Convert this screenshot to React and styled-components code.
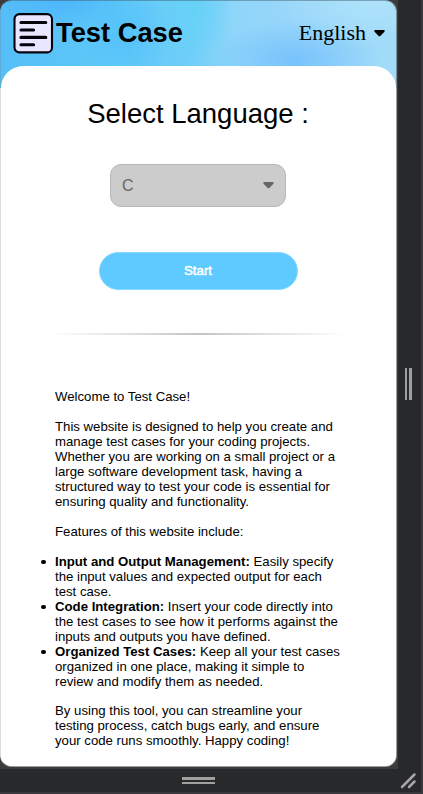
import React from 'react';
import styled, { createGlobalStyle } from 'styled-components';

const GlobalStyle = createGlobalStyle`
  *, *::before, *::after { box-sizing: border-box; }
  body { margin: 0; background: #28292b; overflow: hidden; }
`;

const Workspace = styled.div`
  display: grid;
  grid-template-columns: 398px 25px;
  grid-template-rows: 769px 25px;
  width: 423px;
  height: 794px;
  background: #28292b;
  font-family: "Liberation Sans", Arial, sans-serif;
  color: #000;
`;

const Bezel = styled.div`
  background: #3c3c3d;
  padding: 0 1px 2px 0;
`;

const Device = styled.div`
  width: 397px;
  height: 767px;
  border: 1px solid;
  border-color: rgba(60, 90, 105, 0.45) rgba(90, 90, 90, 0.6) rgba(90, 90, 90, 0.6) rgba(120, 120, 120, 0.25);
  border-radius: 12px;
  overflow: hidden;
  background-origin: border-box;
  background-image:
    linear-gradient(transparent 88px, #fff 88px),
    radial-gradient(ellipse 85px 40px at 295px 60px, rgba(112, 190, 252, 0.8), transparent),
    radial-gradient(ellipse 100px 45px at 370px 0, rgba(178, 228, 250, 0.8), transparent),
    radial-gradient(ellipse 40px 50px at 192px 12px, rgba(100, 210, 247, 0.9), transparent),
    radial-gradient(ellipse 45px 45px at 125px 35px, rgba(78, 188, 252, 0.6), transparent),
    radial-gradient(ellipse 70px 30px at 62px 0, rgba(74, 181, 252, 0.9), transparent),
    linear-gradient(90deg, #55bef8 0, #5fc9f7 120px, #70cef9 190px, #90d6fa 235px, #98d6fa 300px, #a2dcf9 397px);
`;

const Header = styled.header`
  display: flex;
  align-items: center;
  justify-content: space-between;
  height: 65px;
  padding: 0 11px 0 12px;
`;

const Brand = styled.div`
  display: flex;
  align-items: center;
  gap: 2px;
`;

const BrandName = styled.h1`
  margin: 0 0 2px;
  font-size: 27.3px;
  line-height: 32px;
  font-weight: 700;
  white-space: nowrap;
`;

const LocalePicker = styled.div`
  display: flex;
  align-items: center;
  gap: 8px;
  padding-bottom: 1px;
  font: 22px/26px "Liberation Serif", "Times New Roman", serif;
`;

const Sheet = styled.main`
  display: flex;
  flex-direction: column;
  align-items: center;
  height: 700px;
  padding: 32px 1px 0 0;
  border-radius: 22px 22px 0 0;
  background: #fff;
`;

const Title = styled.h2`
  margin: 0;
  font-size: 27.5px;
  line-height: 32px;
  font-weight: 400;
  white-space: nowrap;
`;

const LanguageSelect = styled.div`
  display: flex;
  align-items: center;
  justify-content: space-between;
  width: 176px;
  height: 43px;
  margin-top: 34px;
  padding: 0 11px;
  border: 1px solid #b8b8b8;
  border-radius: 11px;
  background: #ccc;
  color: #666;
  font-size: 16px;
`;

const StartButton = styled.button`
  width: 199px;
  height: 38px;
  margin-top: 45px;
  padding: 0 0 2px;
  border: 1px solid #86daff;
  border-radius: 19px;
  background: #5fcaff;
  color: #fff;
  font: 400 13.33px/15px "Liberation Sans", Arial, sans-serif;
  -webkit-text-stroke: 0.5px #fff;
`;

const Divider = styled.div`
  width: 296px;
  height: 2px;
  margin: 43px 0 0 2px;
  background: linear-gradient(90deg, transparent, #c4c4c4, transparent);
`;

const Article = styled.article`
  width: 286px;
  margin-top: 54px;
  font-size: 13.2px;
  line-height: 15px;
`;

const Paragraph = styled.p`
  margin: 0 0 15px;
`;

const Features = styled.ul`
  margin: 0 0 14px;
  padding: 0;
  list-style: none;
`;

const Feature = styled.li`
  &::before {
    content: "";
    display: inline-block;
    width: 4.5px;
    height: 4.5px;
    margin: 0 9.5px 2px -14px;
    border-radius: 50%;
    background: #000;
  }
`;

const Handle = styled.div`
  display: flex;
  align-items: center;
  justify-content: center;
  border: 0 solid #39393b;
  border-width: ${({ $vertical }) => ($vertical ? '0 2px 0 0' : '0 0 2px')};
  padding: ${({ $vertical }) => ($vertical ? '0 2px 1px 0' : '0 2px 0 0')};
`;

const Grip = styled.span`
  width: ${({ $vertical }) => ($vertical ? '7px' : '33px')};
  height: ${({ $vertical }) => ($vertical ? '32px' : '7px')};
  border: 0 solid #a0a0a1;
  border-width: ${({ $vertical }) => ($vertical ? '0 3px 0 2px' : '3px 0 2px')};
`;

const Corner = styled(Handle)`
  border-width: 0 2px 2px 0;
`;

const DocumentIcon = () => (
  <svg width="41" height="41" viewBox="0 0 41 41" aria-hidden="true">
    <rect x="1.5" y="1.1" width="37.5" height="38.3" rx="5" fill="#e8e7ff" stroke="#05040d" strokeWidth="2.1" />
    <path d="M8 9.5H32.8M8 17H20.6M8 24.4H32.8M8 31.7H20.6" stroke="#05040d" strokeWidth="3.1" strokeLinecap="round" />
  </svg>
);

const Caret = () => (
  <svg width="11" height="7" viewBox="0 0 11 7" aria-hidden="true">
    <path d="M1.2 0H9.8Q11.3 .3 10.4 1.7L6.4 5.9Q5.5 6.7 4.6 5.9L.6 1.7Q-.3.3 1.2 0Z" fill="currentColor" />
  </svg>
);

const features = [
  ['Input and Output Management:', 'Easily specify the input values and expected output for each test case.'],
  ['Code Integration:', 'Insert your code directly into the test cases to see how it performs against the inputs and outputs you have defined.'],
  ['Organized Test Cases:', 'Keep all your test cases organized in one place, making it simple to review and modify them as needed.'],
];

export default function App() {
  return (
    <>
      <GlobalStyle />
      <Workspace>
        <Bezel>
          <Device>
            <Header>
              <Brand><DocumentIcon /><BrandName>Test Case</BrandName></Brand>
              <LocalePicker>English<Caret /></LocalePicker>
            </Header>
            <Sheet>
              <Title>Select Language :</Title>
              <LanguageSelect>C<Caret /></LanguageSelect>
              <StartButton type="button">Start</StartButton>
              <Divider />
              <Article>
                <Paragraph>Welcome to Test Case!</Paragraph>
                <Paragraph>This website is designed to help you create and manage test cases for your coding projects. Whether you are working on a small project or a large software development task, having a structured way to test your code is essential for ensuring quality and functionality.</Paragraph>
                <Paragraph>Features of this website include:</Paragraph>
                <Features>
                  {features.map(([name, text]) => <Feature key={name}><strong>{name}</strong> {text}</Feature>)}
                </Features>
                <Paragraph>By using this tool, you can streamline your testing process, catch bugs early, and ensure your code runs smoothly. Happy coding!</Paragraph>
              </Article>
            </Sheet>
          </Device>
        </Bezel>
        <Handle $vertical><Grip $vertical /></Handle>
        <Handle><Grip /></Handle>
        <Corner>
          <svg width="17" height="17" viewBox="0 0 17 17" aria-hidden="true">
            <path d="M2 15L14.5 2.5M9 15L14.5 9.5" stroke="#a5a5a6" strokeWidth="2.5" strokeLinecap="round" />
          </svg>
        </Corner>
      </Workspace>
    </>
  );
}
